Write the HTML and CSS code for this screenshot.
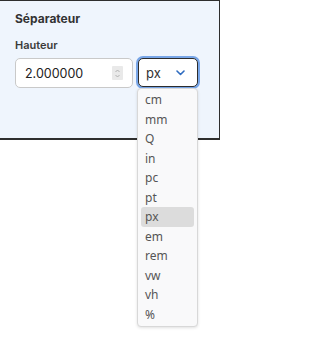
FILE: index.html
```html
<!DOCTYPE html>
<html lang="fr">
<head>
<meta charset="utf-8">
<title>Séparateur</title>
<link rel="stylesheet" href="styles.css">
</head>
<body>
<section class="panel">
  <h2 class="title">Séparateur</h2>
  <div class="label">Hauteur</div>
  <div class="row">
    <div class="number">
      <span class="value">2.000000</span>
      <span class="spin">
        <svg width="7" height="11" viewBox="0 0 7 11"><path d="M1.5 4 L3.5 2 L5.5 4 M1.5 7 L3.5 9 L5.5 7" fill="none" stroke="#a9a9a9" stroke-width="0.9"/></svg>
      </span>
    </div>
    <div class="select-wrap">
      <div class="select">
        <span class="sel-text">px</span>
        <svg class="chev" width="9" height="6" viewBox="0 0 9 6"><path d="M1 1 L4.5 4.5 L8 1" fill="none" stroke="#2f6cc0" stroke-width="1.6" stroke-linecap="round" stroke-linejoin="round"/></svg>
      </div>
      <ul class="menu">
        <li>cm</li>
        <li>mm</li>
        <li>Q</li>
        <li>in</li>
        <li>pc</li>
        <li>pt</li>
        <li class="active">px</li>
        <li>em</li>
        <li>rem</li>
        <li>vw</li>
        <li>vh</li>
        <li>%</li>
      </ul>
    </div>
  </div>
</section>
</body>
</html>
```
FILE: styles.css
```css
html, body {
  margin: 0;
  padding: 0;
  background: #ffffff;
}
body {
  width: 220px;
  height: 355px;
  font-family: Inter, "Liberation Sans", sans-serif;
}
.panel {
  box-sizing: border-box;
  width: 220px;
  height: 140px;
  background: #eff5fd;
  border-top: 1px solid #2e2e2e;
  border-right: 1px solid #2e2e2e;
  border-bottom: 2px solid #2e2e2e;
  padding: 10px 0 0 15px;
}
.title {
  margin: 0;
  font-size: 12px;
  line-height: 15px;
  font-weight: 700;
  color: #333333;
}
.label {
  margin-top: 12px;
  font-size: 11px;
  line-height: 14px;
  font-weight: 600;
  color: #3a3a3a;
}
.row {
  margin-top: 6px;
  display: flex;
  align-items: flex-start;
  gap: 5px;
}
.number {
  box-sizing: border-box;
  width: 118px;
  height: 30px;
  background: #ffffff;
  border: 1px solid #c9c9c9;
  border-radius: 5px;
  display: flex;
  align-items: center;
  justify-content: space-between;
  padding: 0 9px 0 9px;
}
.value {
  font-size: 12.5px;
  color: #222222;
}
.spin {
  width: 11px;
  height: 14px;
  background: #e9e9e9;
  border-radius: 1px;
  display: flex;
  align-items: center;
  justify-content: center;
}
.select-wrap {
  position: relative;
}
.select {
  box-sizing: border-box;
  width: 60px;
  height: 29px;
  border: 1px solid #2d2d2d;
  border-radius: 5px;
  background: #ffffff;
  box-shadow: 0 0 0 2px #78a6e8;
  display: flex;
  align-items: center;
  padding: 0 12px 0 7px;
  justify-content: space-between;
}
.sel-text {
  font-size: 13px;
  color: #333333;
}
.chev {
  display: block;
  margin-top: 1px;
}
.menu {
  position: absolute;
  top: 30px;
  left: -1px;
  box-sizing: border-box;
  width: 61px;
  margin: 0;
  padding: 1px 3px 2px 3px;
  list-style: none;
  background: #f9f9fa;
  border: 1px solid #d8d8d8;
  border-radius: 4px;
  box-shadow: 0 1px 3px rgba(0, 0, 0, 0.12);
  font-family: "Noto Sans", "DejaVu Sans", sans-serif;
  font-size: 12px;
  color: #555555;
}
.menu li {
  height: 19.5px;
  line-height: 19.5px;
  padding-left: 4px;
  border-radius: 3px;
}
.menu li.active {
  background: #dcdcdc;
}
```
